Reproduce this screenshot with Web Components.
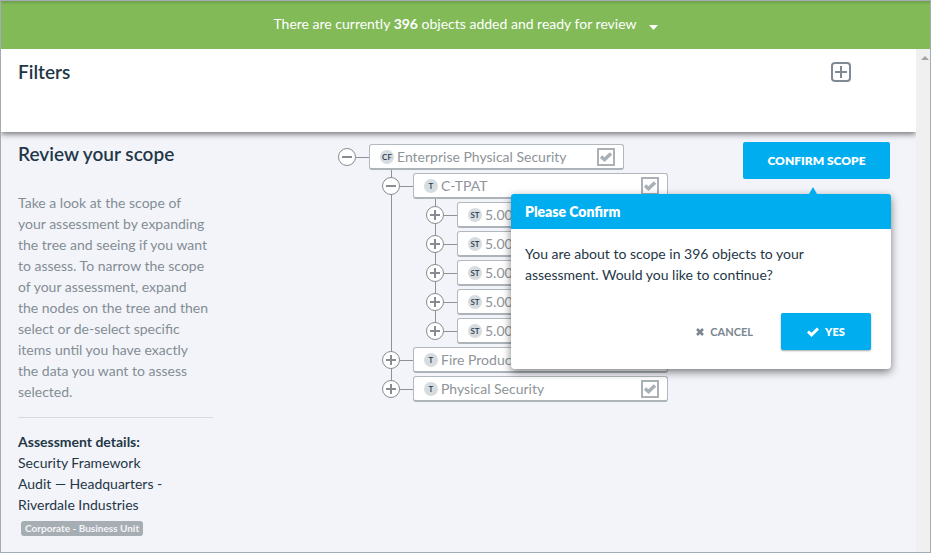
<!DOCTYPE html>
<html lang="en">
<head>
<meta charset="utf-8">
<title>Review your scope</title>
<style>
  html, body { margin: 0; height: 100%; }
  body {
    --ink: #1f3747;
    --muted: #838d95;
    --blue: #00adef;
    --page: #f3f4f9;
    font: 14px/21px Lato, "Liberation Sans", sans-serif;
    color: var(--ink);
  }
</style>
</head>
<body>
<app-frame>
  <scope-banner slot="banner" count="396"></scope-banner>
  <filter-bar heading="Filters"></filter-bar>
  <scope-review>
    <scope-sidebar slot="aside" heading="Review your scope">
      Take a look at the scope of<br>
      your assessment by expanding<br>
      the tree and seeing if you want<br>
      to assess. To narrow the scope<br>
      of your assessment, expand<br>
      the nodes on the tree and then<br>
      select or de-select specific<br>
      items until you have exactly<br>
      the data you want to assess<br>
      selected.
      <span slot="details">Security Framework<br>Audit — Headquarters -<br>Riverdale Industries</span>
      <span slot="unit">Corporate - Business Unit</span>
    </scope-sidebar>
    <tree-node code="CF" label="Enterprise Physical Security" open root>
      <tree-node code="T" label="C-TPAT" open>
        <tree-node code="ST" label="5.00"></tree-node>
        <tree-node code="ST" label="5.00"></tree-node>
        <tree-node code="ST" label="5.00"></tree-node>
        <tree-node code="ST" label="5.00"></tree-node>
        <tree-node code="ST" label="5.00"></tree-node>
      </tree-node>
      <tree-node code="T" label="Fire Produc"></tree-node>
      <tree-node code="T" label="Physical Security"></tree-node>
    </tree-node>
    <confirm-action slot="action" label="CONFIRM SCOPE" heading="Please Confirm">
      You are about to scope in 396 objects to your<br>assessment. Would you like to continue?
    </confirm-action>
  </scope-review>
</app-frame>

<script>
const base = `*, *::before, *::after { box-sizing: border-box; }
  button { font: inherit; color: inherit; border: 0; background: none; padding: 0; cursor: pointer; }
  h2, h3, p { margin: 0; }
  svg { display: block; flex: none; }`;

class BaseElement extends HTMLElement {
  constructor() {
    super();
    this.attachShadow({ mode: 'open' });
  }
  connectedCallback() {
    this.shadowRoot.innerHTML = `<style>${base}${this.styles()}</style>${this.markup()}`;
  }
  attr(name) { return this.getAttribute(name) || ''; }
}

/* Window frame: banner on top, page content beside its scroll bar */
customElements.define('app-frame', class extends BaseElement {
  styles() { return `
    :host { display: flex; flex-direction: column; min-height: 100vh; box-sizing: border-box;
      border: 1px solid #a3abb4; background: var(--page); }
    .view { flex: 1; display: flex; }
    .content { flex: 1; min-width: 0; display: flex; flex-direction: column; }
    .bar { flex: none; width: 14px; background: #f0f0f0; padding: 7px 0 0 5px; }`; }
  markup() { return `
    <slot name="banner"></slot>
    <div class="view">
      <div class="content"><slot></slot></div>
      <div class="bar"><svg width="8" height="4" viewBox="0 0 8 4"><path d="M4 0L8 4H0z" fill="#a3a3a3"/></svg></div>
    </div>`; }
});

customElements.define('scope-banner', class extends BaseElement {
  styles() { return `
    :host { display: block; color: #fff; background: linear-gradient(#6e9f4b, #82ba58 4px); }
    button { display: flex; align-items: center; justify-content: center; gap: 12px;
      width: 100%; height: 48px; padding-bottom: 4px; }
    svg { margin-top: 8px; }`; }
  markup() { return `
    <button type="button"><span>There are currently <b>${this.attr('count')}</b> objects added and ready for review</span>
      <svg width="9" height="5" viewBox="0 0 9 5"><path d="M0 0H9L4.5 5z" fill="#fff"/></svg></button>`; }
});

customElements.define('filter-bar', class extends BaseElement {
  styles() { return `
    :host { display: flex; justify-content: space-between; height: 83px; padding: 12px 65px 0 17px;
      box-sizing: border-box; background: #fff; box-shadow: 0 2px 6px rgba(0,0,0,.55);
      position: relative; clip-path: inset(0 0 -12px 0); }
    h2 { font-size: 19px; line-height: 22px; font-weight: 600; }
    button { align-self: flex-start; margin-top: 1px; }`; }
  markup() { return `
    <h2>${this.attr('heading')}</h2>
    <button type="button" aria-label="Add filter"><svg width="20" height="20" viewBox="0 0 20 20" fill="none" stroke="#7f8a94" stroke-width="2">
      <rect x="1" y="1" width="18" height="18" rx="3"/><path d="M10 4v12M4 10h12"/></svg></button>`; }
});

customElements.define('scope-review', class extends BaseElement {
  styles() { return `
    :host { flex: 1; display: flex; align-items: flex-start; padding: 9px 26px 15px 17px; }
    .aside { flex: none; width: 195px; }
    .tree { flex: 1; min-width: 0; padding-left: 125px; }`; }
  markup() { return `
    <div class="aside"><slot name="aside"></slot></div>
    <div class="tree"><slot></slot></div>
    <slot name="action"></slot>`; }
});

customElements.define('scope-sidebar', class extends BaseElement {
  styles() { return `
    :host { display: block; white-space: nowrap; }
    h2 { font-size: 19px; line-height: 22px; font-weight: 600; margin: 2px 0 27px; }
    p { color: var(--muted); }
    hr { border: 0; border-top: 1px solid #d5d9dd; margin: 15px 0 13px; }
    h3 { font-size: 14px; line-height: 21px; font-weight: 700; }
    .unit { display: inline-block; margin: 6px 0 0 3px; padding: 0 4px; border-radius: 3px;
      background: #a6aeb3; color: #f3f4f9; font-size: 10px; line-height: 15px; font-weight: 700; }`; }
  markup() { return `
    <h2>${this.attr('heading')}</h2>
    <p><slot></slot></p>
    <hr>
    <h3>Assessment details:</h3>
    <div><slot name="details"></slot></div>
    <div class="unit"><slot name="unit"></slot></div>`; }
});

/* Tree row with a toggle, a labelled box and a tick box; nested nodes go in the slot.
   The vertical connector is the host's background, running past the toggle centre. */
customElements.define('tree-node', class extends BaseElement {
  styles() { return `
    :host { display: block; --line: linear-gradient(#8d9297, #8d9297);
      background: var(--line) 9px 0 / 1px 100% no-repeat; }
    :host(:last-child) { background-size: 1px 16px; }
    :host([root]) { background: none; }
    .row { display: flex; align-items: center; padding-top: 3px;
      background: var(--line) 18px 16px / 13px 1px no-repeat; }
    .toggle { flex: none; width: 18px; height: 18px; border: 1px solid #868c91; border-radius: 50%;
      background: #fff; display: grid; place-items: center; margin-right: 13px; }
    .box { width: 255px; height: 26px; display: flex; align-items: center; gap: 3px; padding: 0 8px 0 10px;
      border: 1px solid #b2b9be; border-bottom: 2px solid #adb4b9; border-radius: 3px; background: #fff; color: #8e9499; }
    .code { flex: none; width: 14px; height: 14px; border-radius: 50%; background: #d7dce0; color: var(--ink);
      font-size: 8px; line-height: 14px; font-weight: 600; text-align: center; }
    label { flex: 1; }
    .tick { flex: none; display: grid; }
    .tick > * { grid-area: 1 / 1; }
    .tick svg { pointer-events: none; place-self: center; display: none; }
    input { appearance: none; width: 18px; height: 18px; margin: 0; border: 2px solid #a9b1b7; background: #fff; }
    input:checked + svg { display: block; }
    .children { margin-left: 44px; }`; }
  markup() {
    const open = this.hasAttribute('open');
    return `
    <div class="row">
      <button class="toggle" type="button" aria-label="${open ? 'Collapse' : 'Expand'}">
        <svg width="10" height="10" viewBox="0 0 10 10" stroke="#868c91" stroke-width="2"><path d="M0 5h10${open ? '' : 'M5 0v10'}"/></svg>
      </button>
      <div class="box">
        <span class="code">${this.attr('code')}</span>
        <label for="pick">${this.attr('label')}</label>
        <span class="tick"><input id="pick" type="checkbox" checked>
          <svg width="12" height="10" viewBox="0 0 12 10" fill="none" stroke="#a9b1b7" stroke-width="3.4"><path d="M1 4.5L4.5 7.6L11 1.5"/></svg></span>
      </div>
    </div>
    <div class="children"><slot></slot></div>`;
  }
});

/* Action button with the confirmation bubble that hangs under it */
customElements.define('confirm-action', class extends BaseElement {
  styles() { return `
    :host { display: block; position: relative; margin-top: 1px; }
    .main, .yes { background: var(--blue); color: #fff; border-radius: 2px; height: 37px; font-weight: 800; }
    .main { display: block; font-size: 12px; width: 147px; }
    .bubble { position: absolute; z-index: 1; top: 52px; right: -1px; width: 380px; border-radius: 4px;
      background: #fff; box-shadow: 0 3px 8px rgba(0,0,0,.5); }
    .bubble::before { content: ""; position: absolute; top: -7px; right: 74px;
      border: solid transparent; border-width: 0 4px 7px; border-bottom-color: var(--blue); }
    h3 { font-size: 14px; line-height: 35px; font-weight: 800; padding: 0 14px;
      color: #fff; background: var(--blue); border-radius: 3px 3px 0 0; }
    p { padding: 14px 14px 28px; }
    .actions { display: flex; justify-content: flex-end; align-items: center; gap: 28px; padding: 0 20px 19px; }
    .actions button { display: flex; align-items: center; justify-content: center; gap: 6px; font-size: 11px; }
    .cancel { color: #7b868f; font-weight: 700; }
    .yes { width: 90px; box-shadow: 0 1px 2px rgba(0,0,0,.35); }`; }
  markup() { return `
    <button class="main" type="button">${this.attr('label')}</button>
    <div class="bubble" role="dialog" aria-label="${this.attr('heading')}">
      <h3>${this.attr('heading')}</h3>
      <p><slot></slot></p>
      <div class="actions">
        <button class="cancel" type="button"><svg width="8" height="8" viewBox="0 0 8 8" stroke="currentColor" stroke-width="2.6"><path d="M1 1l6 6M7 1L1 7"/></svg>CANCEL</button>
        <button class="yes" type="button"><svg width="12" height="10" viewBox="0 0 12 10" fill="none" stroke="currentColor" stroke-width="3"><path d="M1 4.5L4.5 7.8L11 1.5"/></svg>YES</button>
      </div>
    </div>`; }
});
</script>
</body>
</html>
